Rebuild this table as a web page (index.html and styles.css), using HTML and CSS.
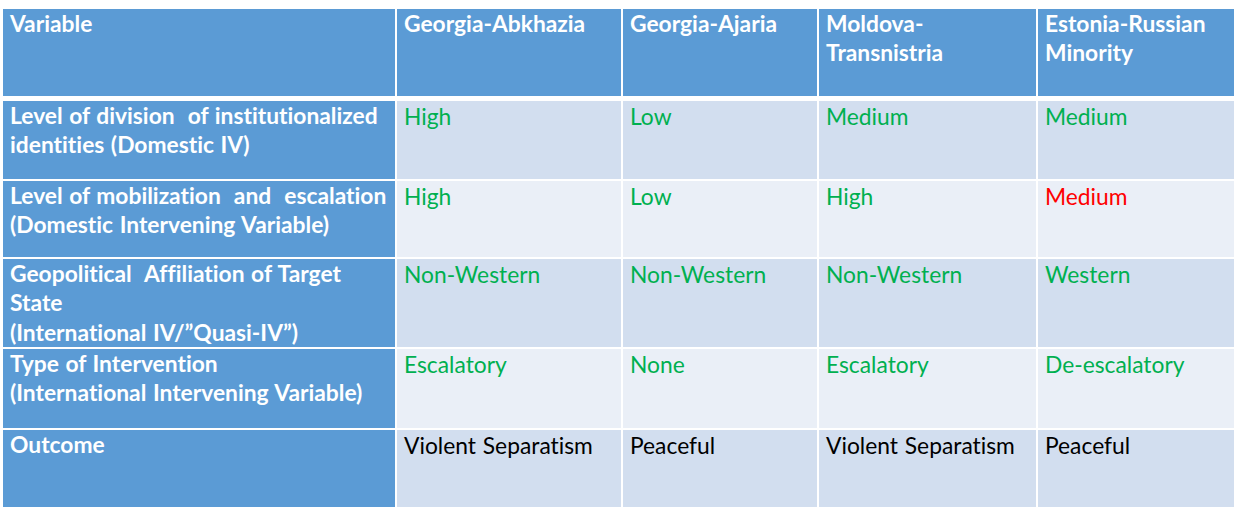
FILE: index.html
```html
<!DOCTYPE html>
<html lang="en">
<head>
<meta charset="utf-8">
<title>Comparison table</title>
<link rel="stylesheet" href="styles.css">
</head>
<body>
<table class="grid">
  <colgroup>
    <col class="c1"><col class="c2"><col class="c3"><col class="c4"><col class="c5">
  </colgroup>
  <thead>
    <tr class="r-head">
      <th>Variable</th>
      <th>Georgia-Abkhazia</th>
      <th>Georgia-Ajaria</th>
      <th>Moldova-<br>Transnistria</th>
      <th>Estonia-Russian Minority</th>
    </tr>
  </thead>
  <tbody>
    <tr class="r1 odd">
      <th>Level&nbsp;of division&nbsp; of institutionalized identities (Domestic IV)</th>
      <td class="green">High</td>
      <td class="green">Low</td>
      <td class="green">Medium</td>
      <td class="green">Medium</td>
    </tr>
    <tr class="r2 even">
      <th>Level&nbsp;of mobilization&nbsp; and&nbsp; escalation (Domestic Intervening Variable)</th>
      <td class="green">High</td>
      <td class="green">Low</td>
      <td class="green">High</td>
      <td class="red">Medium</td>
    </tr>
    <tr class="r3 odd">
      <th>Geopolitical&nbsp; Affiliation of Target<br>State<br>(International IV/”Quasi-IV”)</th>
      <td class="green">Non-Western</td>
      <td class="green">Non-Western</td>
      <td class="green">Non-Western</td>
      <td class="green">Western</td>
    </tr>
    <tr class="r4 even">
      <th>Type of Intervention<br>(International Intervening Variable)</th>
      <td class="green">Escalatory</td>
      <td class="green">None</td>
      <td class="green">Escalatory</td>
      <td class="green">De-escalatory</td>
    </tr>
    <tr class="r5 odd">
      <th>Outcome</th>
      <td class="black">Violent Separatism</td>
      <td class="black">Peaceful</td>
      <td class="black">Violent Separatism</td>
      <td class="black">Peaceful</td>
    </tr>
  </tbody>
</table>
</body>
</html>
```

FILE: styles.css
```css
html, body {
  margin: 0;
  padding: 0;
  background: #ffffff;
}

body {
  font-family: Lato, "Liberation Sans", sans-serif;
}

.grid {
  margin: 7px 0 0 1px;
  border-collapse: separate;
  border-spacing: 2px;
  table-layout: fixed;
  width: 1235px;
  font-size: 22.8px;
  line-height: 29.3px;
  font-variant-ligatures: none;
  word-spacing: 1px;
}

.c1 { width: 392px; }
.c2 { width: 224px; }
.c3 { width: 194px; }
.c4 { width: 217px; }
.c5 { width: 196px; }

.grid th,
.grid td {
  vertical-align: top;
  text-align: left;
  padding: 0 4px 0 7px;
  box-sizing: border-box;
}

.grid th {
  background: #5b9bd5;
  color: #ffffff;
  font-weight: 700;
}

.grid td {
  font-weight: 400;
  padding-top: 1px;
}

.r-head th {
  border-bottom: 3px solid #ffffff;
}

.r-head { height: 90px; }
.r1 { height: 78px; }
.r2 { height: 76px; }
.r3 { height: 88px; }
.r4 { height: 79px; }
.r5 { height: 77px; }

.odd td { background: #d2deef; }
.even td { background: #eaeff7; }

.green { color: #00b050; }
.red { color: #ff0000; }
.black { color: #000000; }
```
